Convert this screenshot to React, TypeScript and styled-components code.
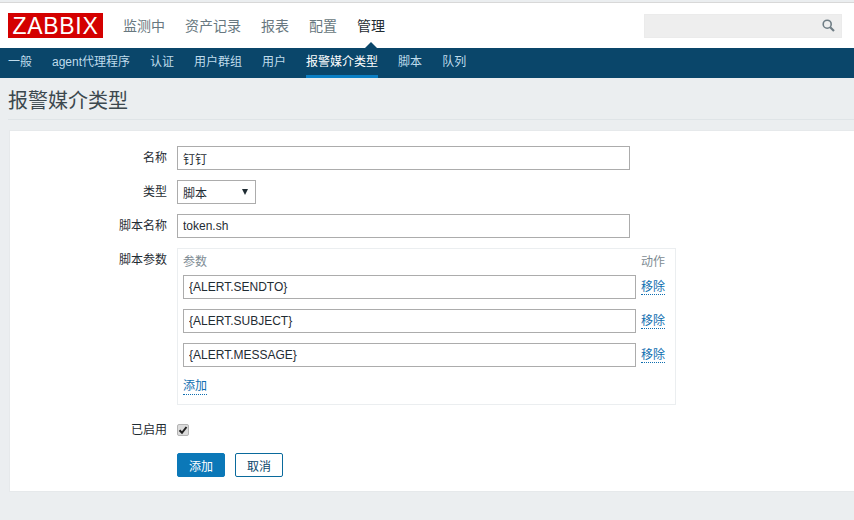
import React from "react";
import styled, { createGlobalStyle } from "styled-components";

const GlobalStyle = createGlobalStyle`
    html, body {
        margin: 0;
        padding: 0;
        background: #ebeef0;
    }
    body {
        font-family: "Liberation Sans", "Noto Sans CJK SC", sans-serif;
        font-size: 12px;
        color: #1f2c33;
        overflow: hidden;
    }
`;

const Page = styled.div`
    width: 854px;
    height: 520px;
    overflow: hidden;
`;

const TopBar = styled.header`
    display: flex;
    align-items: center;
    height: 45px;
    margin-top: 2px;
    padding: 0 12px 0 8px;
    background: #fff;
    border-top: 1px solid #d8d8d8;
`;

const Logo = styled.div`
    width: 95px;
    height: 25px;
    margin-right: 20px;
    background: #d40000;
    color: #fff;
    font-size: 23px;
    line-height: 26px;
    letter-spacing: 0.7px;
    text-align: center;
`;

const MainNav = styled.nav`
    display: flex;
    gap: 20px;
    flex: 1;
`;

const MainItem = styled.a<{ $active?: boolean }>`
    position: relative;
    font-size: 14px;
    line-height: 24px;
    color: ${(p) => (p.$active ? "#1f2c33" : "#687880")};

    ${(p) =>
        p.$active &&
        `&::after {
            content: "";
            position: absolute;
            left: 50%;
            bottom: -11px;
            margin-left: -7px;
            border-left: 7px solid transparent;
            border-right: 7px solid transparent;
            border-bottom: 7px solid #0a466a;
        }`}
`;

const SearchBox = styled.div`
    display: flex;
    align-items: center;
    justify-content: flex-end;
    width: 198px;
    height: 24px;
    padding-right: 6px;
    box-sizing: border-box;
    background: #eeeeee;
    border: 1px solid #ebebeb;
    color: #6f7d85;
`;

const SubNav = styled.nav`
    display: flex;
    gap: 20px;
    height: 30px;
    padding-left: 8px;
    background: #0a466a;
`;

const SubItem = styled.a<{ $active?: boolean }>`
    height: 30px;
    box-sizing: border-box;
    line-height: 29px;
    color: ${(p) => (p.$active ? "#ffffff" : "#bfdcec")};
    border-bottom: 3px solid ${(p) => (p.$active ? "#0b7fc4" : "transparent")};
`;

const TitleBar = styled.div`
    height: 41px;
    margin: 0 0 0 8px;
    border-bottom: 1px solid #dfe4e7;
`;

const Title = styled.h1`
    margin: 0;
    padding-top: 9px;
    font-size: 20px;
    font-weight: 400;
    line-height: 28px;
    color: #3c484e;
`;

const Panel = styled.section`
    display: flex;
    flex-direction: column;
    gap: 10px;
    height: 362px;
    box-sizing: border-box;
    margin: 10px 0 0 9px;
    padding-top: 15px;
    background: #fff;
    border: 1px solid #e6e9eb;
    border-right: 0;
`;

const Row = styled.div`
    display: grid;
    grid-template-columns: 157px auto;
    column-gap: 10px;
    align-items: start;
    justify-content: start;
`;

const Label = styled.label`
    text-align: right;
    line-height: 24px;
    color: #1f2c33;
`;

const TextField = styled.input<{ $width: number }>`
    display: block;
    width: ${(p) => p.$width}px;
    height: 24px;
    box-sizing: border-box;
    margin: 0;
    padding: 0 5px;
    font: inherit;
    color: #1f2c33;
    background: #fff;
    border: 1px solid #acacac;
    outline: none;
`;

const SelectBox = styled.div`
    display: flex;
    align-items: center;
    justify-content: space-between;
    width: 79px;
    height: 24px;
    box-sizing: border-box;
    padding: 0 5px;
    border: 1px solid #acacac;
    color: #1f2c33;
`;

const Caret = styled.span`
    width: 0;
    height: 0;
    margin-right: 2px;
    border-left: 3.5px solid transparent;
    border-right: 3.5px solid transparent;
    border-top: 6px solid #1f2c33;
`;

const ParamsBox = styled.div`
    width: 499px;
    height: 157px;
    box-sizing: border-box;
    margin-bottom: 3px;
    padding: 0 10px 0 5px;
    border: 1px solid #ebeef0;
`;

const ParamsHeader = styled.div`
    display: flex;
    justify-content: space-between;
    height: 26px;
    line-height: 27px;
    color: #7d8b93;
`;

const ParamRow = styled.div`
    display: flex;
    gap: 5px;
    height: 34px;
`;

const LinkText = styled.a`
    align-self: flex-start;
    line-height: 25px;
    height: 19px;
    color: #0f6eb0;
    border-bottom: 1px dotted #0f6eb0;
`;

const AddParam = styled(LinkText)`
    display: block;
    width: fit-content;
    margin-top: -2px;
    line-height: 22px;
`;

const CheckWrap = styled.div`
    display: flex;
    align-items: center;
    height: 14px;
    margin-top: 5px;
`;

const CheckBox = styled.span`
    display: flex;
    align-items: center;
    justify-content: center;
    width: 12px;
    height: 12px;
    border-radius: 2px;
    background: #dcdcdc;
    border: 1px solid #b4b4b4;
    box-sizing: border-box;
`;

const Buttons = styled.div`
    display: flex;
    gap: 10px;
    margin-top: 1px;
`;

const Button = styled.button<{ $primary?: boolean }>`
    width: 48px;
    height: 24px;
    padding: 0;
    font: inherit;
    border-radius: 2px;
    color: ${(p) => (p.$primary ? "#fff" : "#0a466a")};
    background: ${(p) => (p.$primary ? "#0b78b8" : "#fff")};
    border: 1px solid ${(p) => (p.$primary ? "#0b78b8" : "#0a6a9c")};
`;

const mainItems = ["监测中", "资产记录", "报表", "配置", "管理"];
const subItems = ["一般", "agent代理程序", "认证", "用户群组", "用户", "报警媒介类型", "脚本", "队列"];
const params = ["{ALERT.SENDTO}", "{ALERT.SUBJECT}", "{ALERT.MESSAGE}"];

export default function App() {
    return (
        <Page>
            <GlobalStyle />
            <TopBar>
                <Logo>ZABBIX</Logo>
                <MainNav>
                    {mainItems.map((item) => (
                        <MainItem key={item} $active={item === "管理"}>
                            {item}
                        </MainItem>
                    ))}
                </MainNav>
                <SearchBox>
                    <svg width="13" height="13" viewBox="0 0 13 13" fill="none" stroke="currentColor">
                        <circle cx="5.2" cy="5.2" r="4" strokeWidth="1.6" />
                        <path d="M8.2 8.2 L12 12" strokeWidth="2.2" />
                    </svg>
                </SearchBox>
            </TopBar>
            <SubNav>
                {subItems.map((item) => (
                    <SubItem key={item} $active={item === "报警媒介类型"}>
                        {item}
                    </SubItem>
                ))}
            </SubNav>
            <TitleBar>
                <Title>报警媒介类型</Title>
            </TitleBar>
            <Panel>
                <Row>
                    <Label>名称</Label>
                    <TextField $width={453} defaultValue="钉钉" />
                </Row>
                <Row>
                    <Label>类型</Label>
                    <SelectBox>
                        脚本
                        <Caret />
                    </SelectBox>
                </Row>
                <Row>
                    <Label>脚本名称</Label>
                    <TextField $width={453} defaultValue="token.sh" />
                </Row>
                <Row>
                    <Label>脚本参数</Label>
                    <ParamsBox>
                        <ParamsHeader>
                            <span>参数</span>
                            <span>动作</span>
                        </ParamsHeader>
                        {params.map((param) => (
                            <ParamRow key={param}>
                                <TextField $width={453} defaultValue={param} />
                                <LinkText>移除</LinkText>
                            </ParamRow>
                        ))}
                        <AddParam>添加</AddParam>
                    </ParamsBox>
                </Row>
                <Row>
                    <Label>已启用</Label>
                    <CheckWrap>
                        <CheckBox>
                            <svg width="10" height="10" viewBox="0 0 10 10" fill="none" stroke="#222" strokeWidth="2">
                                <path d="M1.5 5.2 L4 7.8 L8.5 2" />
                            </svg>
                        </CheckBox>
                    </CheckWrap>
                </Row>
                <Row>
                    <span />
                    <Buttons>
                        <Button $primary>添加</Button>
                        <Button>取消</Button>
                    </Buttons>
                </Row>
            </Panel>
        </Page>
    );
}
